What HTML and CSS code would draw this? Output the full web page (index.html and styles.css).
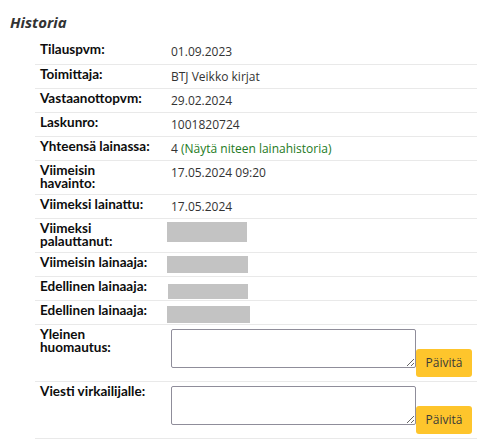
FILE: index.html
```html
<!DOCTYPE html>
<html lang="fi">
<head>
<meta charset="utf-8">
<link rel="stylesheet" href="styles.css">
</head>
<body>
<section class="history">
  <h3 class="history-title">Historia</h3>
  <table class="history-table">
    <tr><th>Tilauspvm:</th><td>01.09.2023</td></tr>
    <tr><th>Toimittaja:</th><td>BTJ Veikko kirjat</td></tr>
    <tr><th>Vastaanottopvm:</th><td>29.02.2024</td></tr>
    <tr><th>Laskunro:</th><td>1001820724</td></tr>
    <tr><th>Yhteensä lainassa:</th><td>4 <a href="#" class="link">(Näytä niteen lainahistoria)</a></td></tr>
    <tr><th>Viimeisin<br>havainto:</th><td>17.05.2024 09:20</td></tr>
    <tr><th>Viimeksi lainattu:</th><td>17.05.2024</td></tr>
    <tr><th>Viimeksi<br>palauttanut:</th><td class="hidden-cell"><span class="redact r1"></span></td></tr>
    <tr><th>Viimeisin lainaaja:</th><td class="hidden-cell"><span class="redact r2"></span></td></tr>
    <tr><th>Edellinen lainaaja:</th><td class="hidden-cell"><span class="redact r3"></span></td></tr>
    <tr><th>Edellinen lainaaja:</th><td class="hidden-cell"><span class="redact r4"></span></td></tr>
    <tr class="note-row"><th>Yleinen<br>huomautus:</th><td><div class="note"><textarea class="note-input"></textarea><button class="btn">Päivitä</button></div></td></tr>
    <tr class="note-row"><th>Viesti virkailijalle:</th><td><div class="note"><textarea class="note-input"></textarea><button class="btn">Päivitä</button></div></td></tr>
  </table>
</section>
</body>
</html>
```

FILE: styles.css
```css
html, body {
  margin: 0;
  padding: 0;
  background: #fff;
}
body {
  font-family: "Open Sans", "Noto Sans", sans-serif;
  font-size: 12px;
  color: #333;
}
.history {
  padding: 11px 0 0 10px;
}
.history-title {
  margin: 0 0 7px 0;
  font-size: 15px;
  font-weight: bold;
  font-style: italic;
  color: #333;
  line-height: 22px;
}
.history-table {
  margin-left: 25px;
  width: 442px;
  border-collapse: collapse;
}
.history-table tr {
  border-bottom: 1px solid #e9e9e9;
  height: 24px;
}
.history-table th {
  width: 30%;
  text-align: left;
  vertical-align: top;
  white-space: nowrap;
  font-family: Lato, "Open Sans", sans-serif;
  font-weight: bold;
  color: #0d0d0d;
  padding: 3px 5px 3px 5px;
  line-height: 13.5px;
  font-size: 13.5px;
}
.history-table td {
  vertical-align: top;
  padding: 3px 5px;
  line-height: 17px;
}
.history-table .hidden-cell {
  padding: 0 0 0 1px;
}
.link {
  color: #237a23;
  text-decoration: none;
}
.redact {
  display: block;
  background: #c3c3c3;
}
.r1 { width: 80px; height: 20px; margin-top: 3px; }
.r2 { width: 81px; height: 17px; margin-top: 3px; }
.r3 { width: 80px; height: 15px; margin-top: 7px; margin-left: 1px; }
.r4 { width: 83px; height: 17px; margin-top: 5px; }
.note-row td {
  padding-top: 4px;
  padding-bottom: 4px;
}
.note {
  display: flex;
  align-items: flex-start;
}
.note-input {
  box-sizing: border-box;
  width: 245px;
  height: 39px;
  border: 1px solid #8f8d9a;
  border-radius: 2px;
  margin: 0;
  padding: 2px;
  resize: both;
  font: inherit;
}
.btn {
  margin-top: 20px;
  width: 56px;
  height: 28px;
  border: none;
  border-radius: 3px;
  background: #fec52c;
  color: #3a3a3a;
  font-family: "Open Sans", "Noto Sans", sans-serif;
  font-size: 12px;
  padding: 0;
}
```
